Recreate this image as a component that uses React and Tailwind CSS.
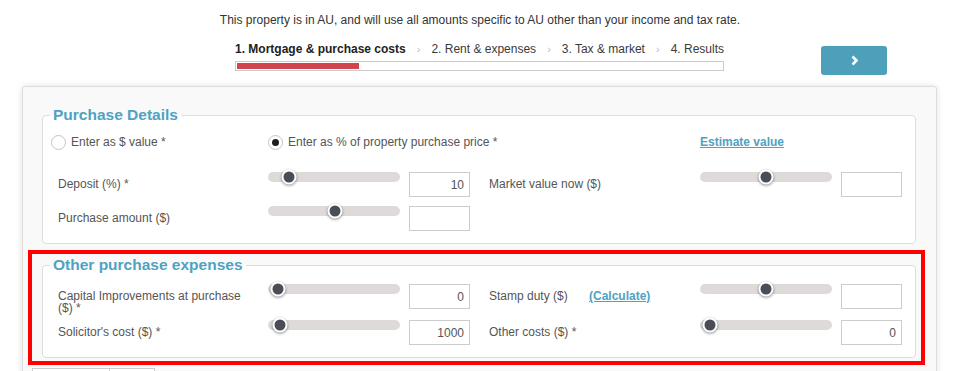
import React from "react";

const steps = [
  "1. Mortgage & purchase costs",
  "2. Rent & expenses",
  "3. Tax & market",
  "4. Results",
];

function Slider({ pos }) {
  return (
    <div className="relative h-[10px] w-[132px] shrink-0 rounded-full bg-[#dedada]">
      {/* thumb */}
      <span
        className="absolute top-1/2 h-[15px] w-[15px] -translate-x-1/2 -translate-y-1/2 rounded-full border-2 border-white bg-[#4a4d55] shadow-[0_1px_3px_rgba(0,0,0,0.45)]"
        style={{ left: pos }}
      />
    </div>
  );
}

function Field({ value }) {
  return (
    <input
      readOnly
      value={value}
      className="ml-[9px] h-[25px] w-[61px] shrink-0 border border-[#cccccc] bg-white pr-[5px] text-right text-[12px] text-[#555] outline-none"
    />
  );
}

function Row({ label, pos, value, label2, link, pos2, value2, className }) {
  return (
    <div className={`flex items-start pl-[15px] ${className}`}>
      <div className="w-[210px] shrink-0 pr-[20px] pt-[6px] leading-[12px]">{label}</div>
      <Slider pos={pos} />
      <Field value={value} />
      <div className="ml-[19px] flex w-[211px] shrink-0 pt-[6px] leading-[12px]">
        <span className={link ? "w-[100px]" : ""}>{label2}</span>
        {link && (
          <a className="font-bold text-[#4ea2c2] underline">{link}</a>
        )}
      </div>
      <Slider pos={pos2} />
      <Field value={value2} />
    </div>
  );
}

function Radio({ checked, children }) {
  return (
    <label className="flex items-center">
      <span className="flex h-[15px] w-[15px] items-center justify-center rounded-full border border-[#c4c4c4] bg-white">
        {checked && <span className="h-[7px] w-[7px] rounded-full bg-[#1e1e1e]" />}
      </span>
      <span className="ml-[5px]">{children}</span>
    </label>
  );
}

function Legend({ children }) {
  return (
    <legend className="ml-[7px] px-[3px] text-[15.5px] font-bold leading-[18px] text-[#4ea2c2]">
      {children}
    </legend>
  );
}

export default function App() {
  return (
    <div className="min-h-screen bg-white font-['Liberation_Sans',Arial,sans-serif] text-[12px] text-[#555]">
      <p className="pt-[13px] text-center leading-[14px] text-[#333]">
        This property is in AU, and will use all amounts specific to AU other than your income and tax rate.
      </p>

      {/* steps + next */}
      <div className="mt-[15px] flex items-start pl-[235px]">
        <div className="w-[489px]">
          <div className="flex justify-between leading-[14px] text-[#3a3a3a]">
            {steps.map((s, i) => (
              <React.Fragment key={s}>
                {i > 0 && <span className="text-[11px] text-[#bbb]">›</span>}
                <span className={i === 0 ? "font-bold text-[#222]" : ""}>{s}</span>
              </React.Fragment>
            ))}
          </div>
          <div className="mt-[5px] h-[10px] border border-[#cccccc] bg-white p-px">
            <div className="h-full w-[122px] bg-[#d1454e]" />
          </div>
        </div>
        <button className="ml-[97px] mt-[4px] flex h-[29px] w-[66px] items-center justify-center rounded-[3px] bg-[#4e9fba]">
          <svg width="9" height="11" viewBox="0 0 9 11">
            <path d="M2.5 1.5 L6.5 5.5 L2.5 9.5" fill="none" stroke="white" strokeWidth="2.6" />
          </svg>
        </button>
      </div>

      {/* form panel */}
      <div className="ml-[22px] mt-[11px] w-[915px] rounded-[3px] border border-[#dddddd] bg-[#f9f9f9] pb-[20px] pl-[19px] pr-[20px] pt-[19px] shadow-[0_0_6px_rgba(0,0,0,0.12)]">
        <fieldset className="rounded-[4px] border border-[#dddddd] bg-white pb-[12px]">
          <Legend>Purchase Details</Legend>
          <div className="mt-[10px] flex h-[16px] items-center pl-[8px]">
            <div className="w-[217px]">
              <Radio>Enter as $ value *</Radio>
            </div>
            <div className="w-[432px]">
              <Radio checked>Enter as % of property purchase price *</Radio>
            </div>
            <a className="font-bold text-[#4ea2c2] underline">Estimate value</a>
          </div>
          <Row
            className="mt-[22px]"
            label="Deposit (%) *"
            pos={21}
            value="10"
            label2="Market value now ($)"
            pos2={66}
            value2=""
          />
          <div className="mt-[9px] flex items-start pl-[15px]">
            <div className="w-[210px] shrink-0 pt-[6px] leading-[12px]">Purchase amount ($)</div>
            <Slider pos={67} />
            <Field value="" />
          </div>
        </fieldset>

        {/* highlighted section */}
        <div className="-ml-[14px] -mr-[9px] mt-[6px] border-4 border-[#ff0000] pb-[3px] pl-[10px] pr-[5px] pt-[2px]">
          <fieldset className="rounded-[4px] border border-[#dddddd] bg-white pb-[12px]">
            <Legend>Other purchase expenses</Legend>
            <Row
              className="mt-[10px]"
              label="Capital Improvements at purchase ($) *"
              pos={10}
              value="0"
              label2="Stamp duty ($)"
              link="(Calculate)"
              pos2={66}
              value2=""
            />
            <Row
              className="mt-[6px]"
              label="Solicitor's cost ($) *"
              pos={12}
              value="1000"
              label2="Other costs ($) *"
              pos2={10}
              value2="0"
            />
          </fieldset>
        </div>

        <div className="-ml-[10px] mt-[3px] flex">
          <div className="h-[22px] w-[78px] border border-[#cccccc] bg-white" />
          <div className="h-[22px] w-[45px] border border-l-0 border-[#cccccc] bg-white" />
        </div>
      </div>
    </div>
  );
}
